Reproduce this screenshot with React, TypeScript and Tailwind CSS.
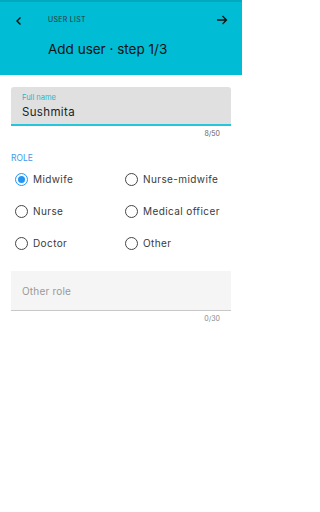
import { useState } from 'react';

const roles = ['Midwife', 'Nurse-midwife', 'Nurse', 'Medical officer', 'Doctor', 'Other'];

function Radio({ checked }: { checked: boolean }) {
  return (
    <span
      className={`flex h-[13px] w-[13px] shrink-0 items-center justify-center rounded-full border-[1.5px] ${
        checked ? 'border-[#2196f3]' : 'border-[#444]'
      }`}
    >
      {checked && <span className="h-[7px] w-[7px] rounded-full bg-[#2196f3]" />}
    </span>
  );
}

export default function App() {
  const [role, setRole] = useState('Midwife');
  const [name, setName] = useState('Sushmita');
  const [other, setOther] = useState('');

  return (
    <div className="min-h-[512px] w-[242px] bg-white font-['Inter',sans-serif] text-[#222]">
      {/* Header */}
      <div className="h-[75px] border-t-2 border-[#00a9bd] bg-[#00bcd4]">
        <div className="flex h-[36px] items-center px-[14px]">
          <svg width="10" height="10" viewBox="0 0 10 10" className="mt-px">
            <path d="M6.5 1.5 L3 5 L6.5 8.5" fill="none" stroke="#111" strokeWidth="1.4" />
          </svg>
          <span className="ml-[24px] flex-1 text-[7px] tracking-[0.04em] text-[#333]">USER LIST</span>
          <svg width="12" height="12" viewBox="0 0 12 12">
            <path d="M1 6 H10.5 M6.5 2 L10.5 6 L6.5 10" fill="none" stroke="#111" strokeWidth="1.3" />
          </svg>
        </div>
        <div className="pl-[48px] pt-[1px] text-[13.5px] leading-[20px] text-[#111]">Add user · step 1/3</div>
      </div>

      <div className="px-[11px] pt-[12px]">
        {/* Full name */}
        <div className="h-[39px] rounded-t-[3px] border-b-2 border-[#26c6da] bg-[#e0e0e0] px-[11px] pt-[6px]">
          <div className="text-[7.5px] leading-[10px] text-[#1eb8cc]">Full name</div>
          <input
            value={name}
            onChange={(e) => setName(e.target.value)}
            className="mt-[2px] block w-full bg-transparent text-[11.5px] leading-[14px] tracking-[0.03em] text-[#222] outline-none"
          />
        </div>
        <div className="pr-[11px] pt-[3px] text-right text-[7px] leading-[10px] text-[#666]">{name.length}/50</div>

        {/* Role */}
        <div className="pt-[13px] text-[8.5px] leading-[12px] text-[#3d9be9]">ROLE</div>
        <div className="mt-[6px] grid grid-cols-2 gap-y-[14px] pl-[4px]">
          {roles.map((r) => (
            <button
              key={r}
              onClick={() => setRole(r)}
              className="flex h-[18px] items-center gap-[5px] text-left text-[10px] tracking-[0.04em] text-[#3a3a3a] even:pl-[2px]"
            >
              <Radio checked={role === r} />
              {r}
            </button>
          ))}
        </div>

        {/* Other role */}
        <div className="mt-[19px] h-[40px] border-b-[1.5px] border-[#c8c8c8] bg-[#f5f5f5] px-[11px]">
          <input
            value={other}
            onChange={(e) => setOther(e.target.value)}
            placeholder="Other role"
            className="h-full w-full bg-transparent text-[10px] tracking-[0.02em] text-[#222] outline-none placeholder:text-[#999]"
          />
        </div>
        <div className="pr-[11px] pt-[3px] text-right text-[7px] leading-[10px] text-[#888]">{other.length}/30</div>
      </div>
    </div>
  );
}
